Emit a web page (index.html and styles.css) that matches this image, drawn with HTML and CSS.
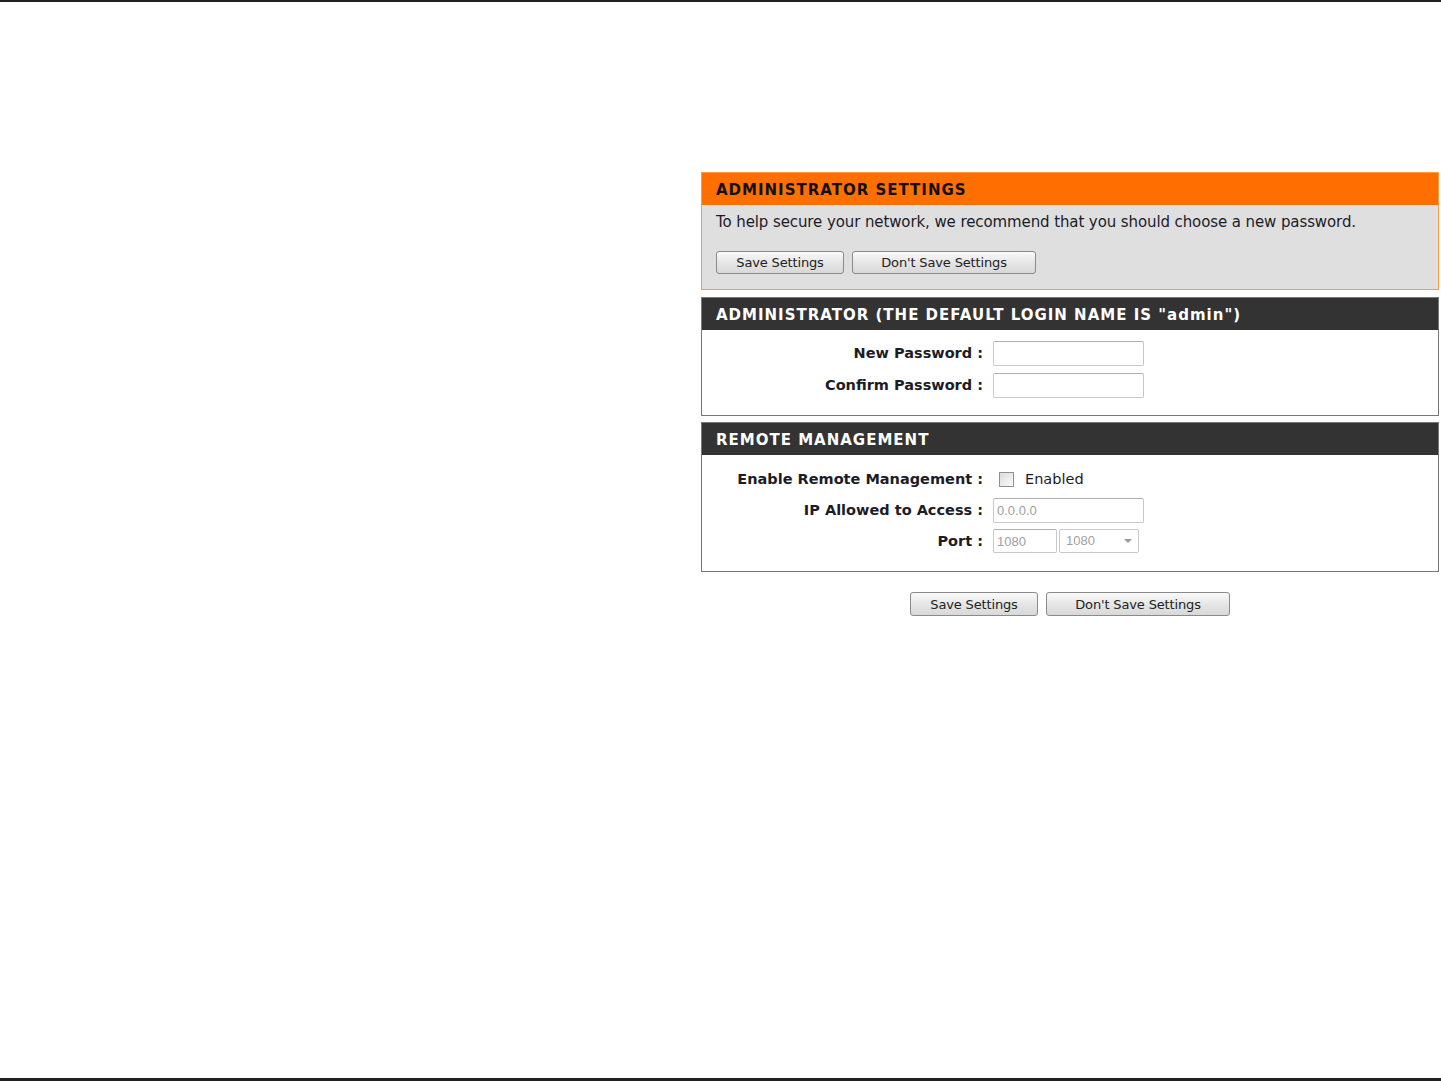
FILE: index.html
```html
<!DOCTYPE html>
<html>
<head>
	<meta charset="utf-8" />
	<title>Administrator Settings</title>
	<link rel="stylesheet" href="styles.css">
</head>
<body>
	<div class="page">
		<div class="content">
			<div class="box box-orange">
				<h2 class="box-title">ADMINISTRATOR SETTINGS</h2>
				<div class="box-body">
					<p class="intro">To help secure your network, we recommend that you should choose a new password.</p>
					<div class="buttons">
						<button class="btn btn-save">Save Settings</button>
						<button class="btn btn-nosave">Don't Save Settings</button>
					</div>
				</div>
			</div>

			<div class="box box-dark box-admin">
				<h2 class="box-title">ADMINISTRATOR (THE DEFAULT LOGIN NAME IS "admin")</h2>
				<div class="form">
					<label class="label">New Password :</label>
					<div class="field"><input type="password" class="text"></div>
					<label class="label">Confirm Password :</label>
					<div class="field"><input type="password" class="text"></div>
				</div>
			</div>

			<div class="box box-dark">
				<h2 class="box-title">REMOTE MANAGEMENT</h2>
				<div class="form form-remote">
					<label class="label">Enable Remote Management :</label>
					<div class="field"><span class="check"></span><span class="check-text">Enabled</span></div>
					<label class="label">IP Allowed to Access :</label>
					<div class="field"><input type="text" class="text" value="0.0.0.0" disabled></div>
					<label class="label">Port :</label>
					<div class="field">
						<input type="text" class="text port" value="1080" disabled>
						<span class="select">1080<span class="arrow"></span></span>
					</div>
				</div>
			</div>

			<div class="buttons buttons-bottom">
				<button class="btn btn-save">Save Settings</button>
				<button class="btn btn-nosave">Don't Save Settings</button>
			</div>
		</div>
	</div>
</body>
</html>
```

FILE: styles.css
```css
body {
	margin: 0;
	padding: 0;
	font-family: "DejaVu Sans", Verdana, sans-serif;
	color: #1c1c28;
	background: #fff;
}

.page {
	height: 1081px;
	box-sizing: border-box;
	border-top: 2px solid #231f20;
	border-bottom: 3px solid #231f20;
}

.content {
	width: 738px;
	margin-left: 701px;
	padding-top: 170px;
}

.box {
	margin-bottom: 8px;
	border: 1px solid #777;
}

.box-title {
	margin: 0;
	height: 32px;
	line-height: 34px;
	padding-left: 14px;
	font-size: 15px;
	font-weight: bold;
	letter-spacing: 1px;
}

.box-orange {
	margin-bottom: 7px;
	border-color: #ff9a40;
}

	.box-orange .box-title {
		background: #ff6f00;
		color: #111;
	}

	.box-orange .box-body {
		background: #dfdfdf;
		padding: 7px 14px 15px;
	}

.box-admin {
	margin-bottom: 6px;
}

.box-dark .box-title {
	background: #333;
	color: #fff;
}

.intro {
	margin: 0 0 19px;
	font-size: 15px;
	line-height: 20px;
	letter-spacing: -0.1px;
}

.buttons {
	display: flex;
	gap: 8px;
}

.buttons-bottom {
	justify-content: center;
	margin-top: 20px;
}

.btn {
	height: 23px;
	padding: 0;
	font-family: inherit;
	font-size: 13px;
	color: #222;
	letter-spacing: -0.15px;
	border: 1px solid #8a8a8a;
	border-radius: 3px;
	background: linear-gradient(#fafafa, #e6e6e6 50%, #d8d8d8);
}

.buttons-bottom .btn {
	height: 24px;
}

.btn-save {
	width: 128px;
}

.btn-nosave {
	width: 184px;
}

.form {
	display: grid;
	grid-template-columns: 281px 1fr;
	column-gap: 10px;
	row-gap: 8px;
	align-items: center;
	padding: 11px 0 18px;
}

.form-remote {
	padding: 12px 0 18px;
	row-gap: 7px;
}

.label {
	text-align: right;
	font-size: 14.5px;
	font-weight: bold;
}

.field {
	display: flex;
	align-items: center;
	height: 24px;
}

.text {
	box-sizing: border-box;
	width: 151px;
	height: 25px;
	margin: 0;
	padding: 0 3px;
	border: 1px solid #c8c8c8;
	border-top-color: #b0b0b0;
	border-radius: 2px;
	background: #fff;
	font-family: "Liberation Sans", Arial, sans-serif;
	font-size: 13px;
	color: #a0a0a0;
}

.port {
	width: 64px;
	height: 24px;
}

.check {
	box-sizing: border-box;
	width: 15px;
	height: 15px;
	margin-left: 6px;
	border: 1px solid #8f8f8f;
	background: linear-gradient(135deg, #dcdcdc, #fafafa);
}

.check-text {
	margin-left: 11px;
	font-size: 14.5px;
}

.select {
	position: relative;
	box-sizing: border-box;
	width: 80px;
	height: 24px;
	margin-left: 2px;
	padding-left: 6px;
	line-height: 22px;
	border: 1px solid #c8c8c8;
	border-radius: 2px;
	font-family: "Liberation Sans", Arial, sans-serif;
	font-size: 13px;
	color: #a0a0a0;
}

	.select .arrow {
		position: absolute;
		right: 6px;
		top: 9px;
		border-left: 4px solid transparent;
		border-right: 4px solid transparent;
		border-top: 4px solid #999;
	}
```
